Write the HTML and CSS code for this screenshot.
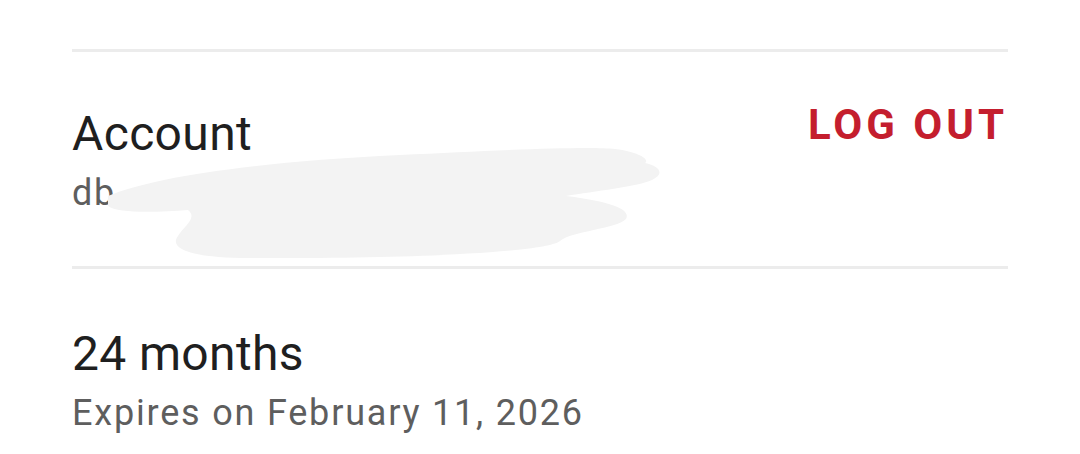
FILE: index.html
```html
<!DOCTYPE html>
<html>
<head>
<meta charset="utf-8">
<link rel="stylesheet" href="styles.css">
</head>
<body>
<div class="page">
  <div class="divider"></div>
  <div class="row account-row">
    <div class="texts account-texts">
      <div class="title">Account</div>
      <div class="subtitle">db<span class="hidden-mail">xxxxxxxxxxxxxxxxxxxxxxxxxxxx.....</span></div>
      <svg class="smear" viewBox="100 140 570 125" width="570" height="125" aria-hidden="true">
        <path fill="#f3f3f3" d="M108 196 C 150 178, 250 162, 400 155 C 500 150, 590 146, 615 149 C 640 152, 650 160, 645 163 C 660 166, 665 174, 652 180 C 636 187, 595 191, 566 196 C 605 201, 632 208, 626 219 C 616 229, 572 231, 560 241 C 545 253, 400 259, 250 258 C 182 258, 170 246, 178 236 C 184 226, 198 218, 188 210 C 160 212, 118 214, 108 206 Z"/>
      </svg>
    </div>
    <div class="logout">LOG OUT</div>
  </div>
  <div class="divider"></div>
  <div class="row plan-row">
    <div class="texts">
      <div class="title">24 months</div>
      <div class="subtitle">Expires on February 11, 2026</div>
    </div>
  </div>
</div>
</body>
</html>
```
FILE: styles.css
```css
html, body {
  margin: 0;
  padding: 0;
  background: #ffffff;
}
body {
  font-family: Roboto, "Noto Sans", "Liberation Sans", sans-serif;
  width: 1080px;
  height: 454px;
  overflow: hidden;
}
.page {
  padding: 49px 72px 0 72px;
}
.divider {
  height: 3px;
  background: #ececec;
}
.row {
  display: flex;
  justify-content: space-between;
  align-items: flex-start;
}
.account-row {
  padding-top: 45px;
  padding-bottom: 51px;
}
.texts {
  position: relative;
}
.account-texts {
  padding-top: 9px;
}
.plan-row {
  padding-top: 57px;
}
.title {
  font-size: 48px;
  line-height: 56px;
  letter-spacing: 0.35px;
  color: #1f1f1f;
  margin-bottom: 9px;
}
.subtitle {
  font-size: 36px;
  line-height: 44px;
  letter-spacing: 1.8px;
  color: #5e5e5e;
  white-space: nowrap;
}
.hidden-mail {
  color: transparent;
}
.smear {
  position: absolute;
  left: 28px;
  top: 43px;
  display: block;
}
.logout {
  font-size: 42px;
  line-height: 56px;
  font-weight: 700;
  letter-spacing: 4px;
  color: #c41e2e;
}
```
